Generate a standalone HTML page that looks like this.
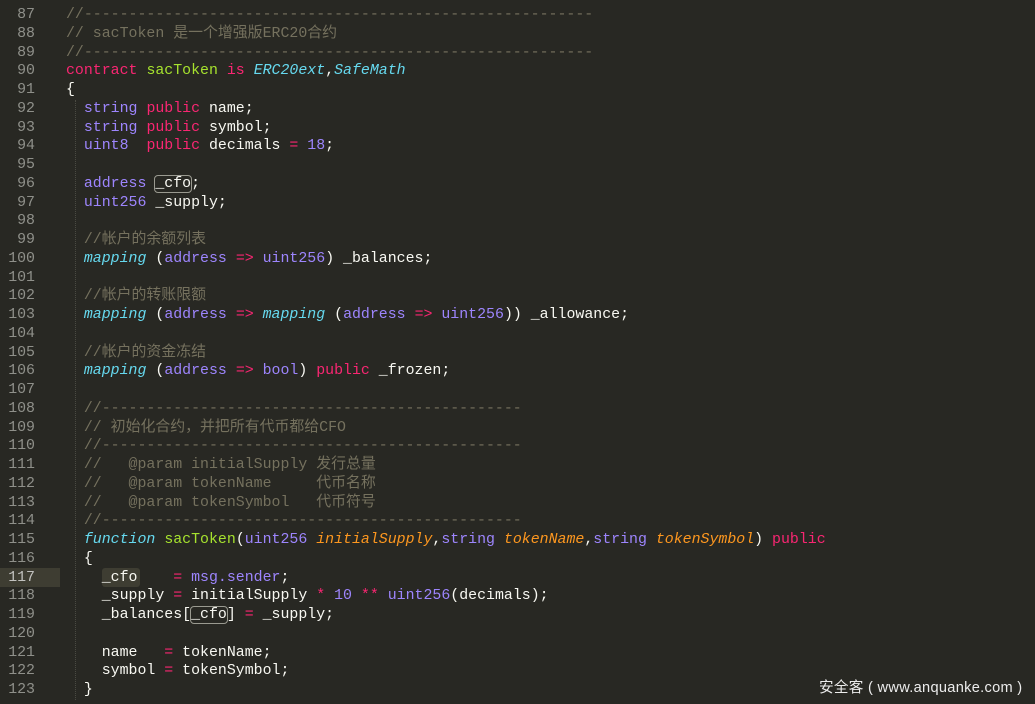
<!DOCTYPE html>
<html><head><meta charset="utf-8"><style>
body{margin:0;background:#272822;}
#w{position:relative;width:1035px;height:704px;background:#282823;overflow:hidden;font-family:"Liberation Mono","Noto Sans CJK SC",monospace;font-size:14.9px;}
.l{position:absolute;left:0;height:18.75px;line-height:18.75px;white-space:pre;width:1035px}
.n{position:absolute;left:0;width:35px;text-align:right;color:#8f908a}
.c{position:absolute;left:66px;color:#f8f8f2}
.cm{color:#75715e}.k{color:#f92672}.g{color:#a6e22e}.t{color:#66d9ef;font-style:italic}.p{color:#9d85fd}.o{color:#fd971f;font-style:italic}
.b{outline:1px solid #9a9a90;border-radius:3px;outline-offset:0px}
.gd{position:absolute;left:75px;width:0;border-left:1px dotted #4a4a42}
</style></head><body><div id="w">
<div class="gd" style="top:100px;height:600px"></div>
<div style="position:absolute;left:0;top:568px;width:60px;height:18.75px;background:#3e3d32"></div>
<div style="position:absolute;left:102px;top:568px;width:38px;height:19px;background:#3e3d32;border-radius:3px"></div>
<div class="l" style="top:6px"><span class="n">87</span><span class="c cm">//---------------------------------------------------------</span></div>
<div class="l" style="top:24.75px"><span class="n">88</span><span class="c cm">// sacToken 是一个增强版ERC20合约</span></div>
<div class="l" style="top:43.5px"><span class="n">89</span><span class="c cm">//---------------------------------------------------------</span></div>
<div class="l" style="top:62.25px"><span class="n">90</span><span class="c"><span class="k">contract</span> <span class="g">sacToken</span> <span class="k">is</span> <span class="t">ERC20ext</span>,<span class="t">SafeMath</span></span></div>
<div class="l" style="top:81px"><span class="n">91</span><span class="c">{</span></div>
<div class="l" style="top:99.75px"><span class="n">92</span><span class="c">  <span class="p">string</span> <span class="k">public</span> name;</span></div>
<div class="l" style="top:118.5px"><span class="n">93</span><span class="c">  <span class="p">string</span> <span class="k">public</span> symbol;</span></div>
<div class="l" style="top:137.25px"><span class="n">94</span><span class="c">  <span class="p">uint8</span>  <span class="k">public</span> decimals <span class="k">=</span> <span class="p">18</span>;</span></div>
<div class="l" style="top:156px"><span class="n">95</span></div>
<div class="l" style="top:174.75px"><span class="n">96</span><span class="c">  <span class="p">address</span> <span class="b">_cfo</span>;</span></div>
<div class="l" style="top:193.5px"><span class="n">97</span><span class="c">  <span class="p">uint256</span> _supply;</span></div>
<div class="l" style="top:212.25px"><span class="n">98</span></div>
<div class="l" style="top:231px"><span class="n">99</span><span class="c cm">  //帐户的余额列表</span></div>
<div class="l" style="top:249.75px"><span class="n">100</span><span class="c">  <span class="t">mapping</span> (<span class="p">address</span> <span class="k">=&gt;</span> <span class="p">uint256</span>) _balances;</span></div>
<div class="l" style="top:268.5px"><span class="n">101</span></div>
<div class="l" style="top:287.25px"><span class="n">102</span><span class="c cm">  //帐户的转账限额</span></div>
<div class="l" style="top:306px"><span class="n">103</span><span class="c">  <span class="t">mapping</span> (<span class="p">address</span> <span class="k">=&gt;</span> <span class="t">mapping</span> (<span class="p">address</span> <span class="k">=&gt;</span> <span class="p">uint256</span>)) _allowance;</span></div>
<div class="l" style="top:324.75px"><span class="n">104</span></div>
<div class="l" style="top:343.5px"><span class="n">105</span><span class="c cm">  //帐户的资金冻结</span></div>
<div class="l" style="top:362.25px"><span class="n">106</span><span class="c">  <span class="t">mapping</span> (<span class="p">address</span> <span class="k">=&gt;</span> <span class="p">bool</span>) <span class="k">public</span> _frozen;</span></div>
<div class="l" style="top:381px"><span class="n">107</span></div>
<div class="l" style="top:399.75px"><span class="n">108</span><span class="c cm">  //-----------------------------------------------</span></div>
<div class="l" style="top:418.5px"><span class="n">109</span><span class="c cm">  // 初始化合约，并把所有代币都给CFO</span></div>
<div class="l" style="top:437.25px"><span class="n">110</span><span class="c cm">  //-----------------------------------------------</span></div>
<div class="l" style="top:456px"><span class="n">111</span><span class="c cm">  //   @param initialSupply 发行总量</span></div>
<div class="l" style="top:474.75px"><span class="n">112</span><span class="c cm">  //   @param tokenName     代币名称</span></div>
<div class="l" style="top:493.5px"><span class="n">113</span><span class="c cm">  //   @param tokenSymbol   代币符号</span></div>
<div class="l" style="top:512.25px"><span class="n">114</span><span class="c cm">  //-----------------------------------------------</span></div>
<div class="l" style="top:531px"><span class="n">115</span><span class="c">  <span class="t">function</span> <span class="g">sacToken</span>(<span class="p">uint256</span> <span class="o">initialSupply</span>,<span class="p">string</span> <span class="o">tokenName</span>,<span class="p">string</span> <span class="o">tokenSymbol</span>) <span class="k">public</span></span></div>
<div class="l" style="top:549.75px"><span class="n">116</span><span class="c">  {</span></div>
<div class="l" style="top:568.5px"><span class="n" style="color:#c2c2bf">117</span><span class="c">    _cfo    <span class="k">=</span> <span class="p">msg.sender</span>;</span></div>
<div class="l" style="top:587.25px"><span class="n">118</span><span class="c">    _supply <span class="k">=</span> initialSupply <span class="k">*</span> <span class="p">10</span> <span class="k">**</span> <span class="p">uint256</span>(decimals);</span></div>
<div class="l" style="top:606px"><span class="n">119</span><span class="c">    _balances[<span class="b">_cfo</span>] <span class="k">=</span> _supply;</span></div>
<div class="l" style="top:624.75px"><span class="n">120</span></div>
<div class="l" style="top:643.5px"><span class="n">121</span><span class="c">    name   <span class="k">=</span> tokenName;</span></div>
<div class="l" style="top:662.25px"><span class="n">122</span><span class="c">    symbol <span class="k">=</span> tokenSymbol;</span></div>
<div class="l" style="top:681px"><span class="n">123</span><span class="c">  }</span></div>
<div style="position:absolute;left:819px;top:676px;font-family:'Liberation Sans','Noto Sans CJK SC',sans-serif;font-size:14.6px;color:#ececec;white-space:pre;letter-spacing:0.3px">安全客 ( www.anquanke.com )</div>
</div></body></html>
